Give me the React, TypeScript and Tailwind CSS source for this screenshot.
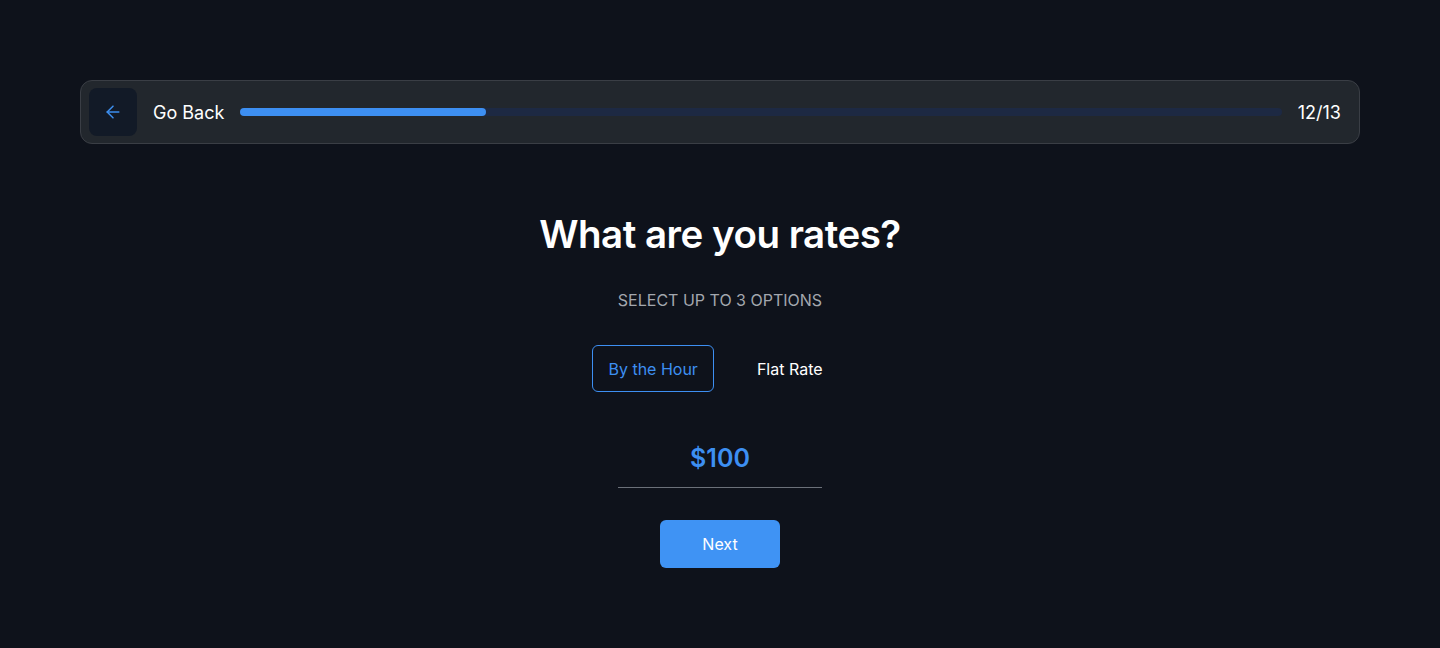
import React from 'react';

export default function App() {
  const step = 12;
  const total = 13;
  return (
    <div
      className="min-h-[648px] w-full bg-[#0e121b] text-white px-20 pt-20"
      style={{ fontFamily: 'Inter, "Noto Sans", sans-serif' }}
    >
      {/* top progress bar */}
      <div className="flex items-center h-[64px] rounded-xl border border-[#3a3e45] bg-[#22272d] pl-2 pr-[18px]">
        <button className="w-12 h-12 rounded-lg bg-[#121a27] flex items-center justify-center text-[#3d8fef]">
          <svg width="20" height="20" viewBox="0 0 24 24" fill="none" stroke="currentColor" strokeWidth="1.8" strokeLinecap="round" strokeLinejoin="round">
            <path d="M19 12H5" />
            <path d="M12 19l-7-7 7-7" />
          </svg>
        </button>
        <span className="ml-4 text-[18px] text-white">Go Back</span>
        <div className="ml-4 flex-1 h-2 rounded-full bg-[#1d2943]">
          <div className="h-2 rounded-full bg-[#3d8ff2] w-[246px]"></div>
        </div>
        <span className="ml-4 text-[18px] text-white">
          {step}/{total}
        </span>
      </div>

      <div className="flex flex-col items-center">
        <h1 className="mt-[66px] text-[38.5px] leading-[48px] font-semibold tracking-[-0.5px]">
          What are you rates?
        </h1>
        <p className="mt-[30px] text-[16px] text-[#a3a7ae] uppercase">Select up to 3 options</p>

        <div className="mt-[33px] flex items-center gap-[43px] mr-[25px]">
          <button className="h-[47px] px-[15px] rounded-md border border-[#3d8ff2] text-[#3d8ff2] text-[16px] font-normal">
            By the Hour
          </button>
          <button className="text-[16px] font-normal text-white">Flat Rate</button>
        </div>

        <div className="mt-[51px] w-[204px] border-b border-[#6b7079] pb-[14px] text-center text-[25px] leading-[30px] font-semibold text-[#3d8ff2]">
          $100
        </div>

        <button className="mt-[32px] w-[120px] h-12 rounded-md bg-[#3f93f4] text-[16px] font-normal text-white">
          Next
        </button>
      </div>
    </div>
  );
}
